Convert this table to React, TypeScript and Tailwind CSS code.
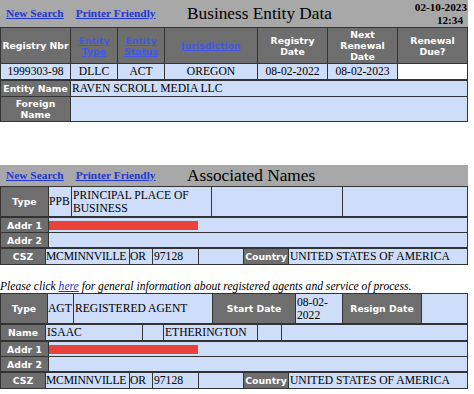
import React from "react";

const SERIF = "font-['Liberation_Serif',serif]";
const LBL =
  "bg-[#6e6e6e] text-white font-bold text-[9.3px] leading-[11px] flex items-center justify-center text-center font-['DejaVu_Sans',sans-serif] overflow-hidden whitespace-nowrap";
const VAL =
  "bg-[#cdddfa] text-black text-[11.6px] leading-[13px] flex items-center pl-px font-['Liberation_Serif',serif] overflow-hidden whitespace-nowrap";
const VALC =
  "bg-[#cdddfa] text-black text-[11.6px] leading-[13px] flex items-center justify-center font-['Liberation_Serif',serif] overflow-hidden whitespace-nowrap";
const LINK = "text-[#2236d0] underline";

function Bar({ title, date }: { title: string; date?: boolean }) {
  return (
    <div className={`flex items-center bg-[#a8a8a8] w-[468px] ${date ? "h-[27px]" : "h-[21px]"} ${SERIF}`}>
      <div className="w-[187px] shrink-0 flex gap-[12px] pl-[6px] font-bold text-[11.4px] leading-[13px]">
        <a className={LINK}>New Search</a>
        <a className={LINK}>Printer Friendly</a>
      </div>
      <div className="flex-1 text-[17.3px] leading-[20px] text-black">{title}</div>
      {date && (
        <div className="text-right font-bold text-[11.2px] leading-[12.5px] pr-px text-black">
          02-10-2023
          <br />
          <span className="pr-[4px]">12:34</span>
        </div>
      )}
    </div>
  );
}

function Redact() {
  return <div className="-ml-[4px] mt-[3px] w-[152px] h-[9px] bg-[#e8423b] self-start" />;
}

function AddrTable() {
  return (
    <div className="grid grid-cols-[47px_418px] grid-rows-[14px_14px] gap-px p-px bg-[#333] w-[468px]">
      <div className={LBL}>Addr 1</div>
      <div className={VAL + " !items-start"}>
        <Redact />
      </div>
      <div className={LBL}>Addr 2</div>
      <div className={VAL}></div>
    </div>
  );
}

function CszTable() {
  return (
    <div className="grid grid-cols-[44px_83px_22px_45px_44px_44px_178px] grid-rows-[15px] gap-px p-px bg-[#333] w-[468px]">
      <div className={LBL}>CSZ</div>
      <div className={VAL + " !pl-0 tracking-[-0.2px]"}>MCMINNVILLE</div>
      <div className={VAL + " !pl-0"}>OR</div>
      <div className={VAL}>97128</div>
      <div className={VAL}></div>
      <div className={LBL}>Country</div>
      <div className={VAL}>UNITED STATES OF AMERICA</div>
    </div>
  );
}

export default function App() {
  return (
    <div className="w-[474px] h-[394px] bg-white overflow-hidden">
      {/* Section 1 */}
      <Bar title="Business Entity Data" date />
      <div className="grid grid-cols-[69px_46px_46px_92px_69px_69px_69px] grid-rows-[35px_15px] gap-px p-px bg-[#333] w-[468px]">
        <div className={LBL}>Registry Nbr</div>
        <div className={LBL}>
          <span className="text-[#4259e0] underline">
            Entity
            <br />
            Type
          </span>
        </div>
        <div className={LBL}>
          <span className="text-[#4259e0] underline">
            Entity
            <br />
            Status
          </span>
        </div>
        <div className={LBL}>
          <span className="text-[#4259e0] underline">Jurisdiction</span>
        </div>
        <div className={LBL}>
          Registry
          <br />
          Date
        </div>
        <div className={LBL}>
          Next
          <br />
          Renewal
          <br />
          Date
        </div>
        <div className={LBL}>
          Renewal
          <br />
          Due?
        </div>
        <div className={VALC}>1999303-98</div>
        <div className={VALC}>DLLC</div>
        <div className={VALC}>ACT</div>
        <div className={VALC}>OREGON</div>
        <div className={VALC}>08-02-2022</div>
        <div className={VALC}>08-02-2023</div>
        <div className="bg-white"></div>
      </div>
      <div className="grid grid-cols-[69px_396px] grid-rows-[15px_24px] gap-px p-px bg-[#333] w-[468px]">
        <div className={LBL}>Entity Name</div>
        <div className={VAL}>RAVEN SCROLL MEDIA LLC</div>
        <div className={LBL}>
          Foreign
          <br />
          Name
        </div>
        <div className={VAL}></div>
      </div>

      {/* Section 2 */}
      <div className="mt-[43px]">
        <Bar title="Associated Names" />
        <div className="grid grid-cols-[47px_22px_139px_130px_124px] grid-rows-[29px] gap-px p-px bg-[#333] w-[468px]">
          <div className={LBL}>Type</div>
          <div className={VAL + " !pl-0"}>PPB</div>
          <div className={VAL + " whitespace-normal"}>
            PRINCIPAL PLACE OF
            <br />
            BUSINESS
          </div>
          <div className={VAL}></div>
          <div className={VAL}></div>
        </div>
        <AddrTable />
        <CszTable />
      </div>

      {/* Section 3 */}
      <div className={`mt-[15px] italic text-[11.6px] leading-[13px] text-black whitespace-nowrap ${SERIF}`}>
        Please click <a className={LINK}>here</a> for general information about registered agents and service of process.
      </div>
      <div className="grid grid-cols-[46px_25px_138px_82px_46px_78px_45px] grid-rows-[29px] gap-px p-px bg-[#333] w-[468px]">
        <div className={LBL}>Type</div>
        <div className={VAL + " !pl-0"}>AGT</div>
        <div className={VAL}>REGISTERED AGENT</div>
        <div className={LBL}>Start Date</div>
        <div className={VAL + " whitespace-normal"}>
          08-02-
          <br />
          2022
        </div>
        <div className={LBL}>Resign Date</div>
        <div className={VAL}></div>
      </div>
      <div className="grid grid-cols-[44px_96px_20px_93px_23px_185px] grid-rows-[15px] gap-px p-px bg-[#333] w-[468px]">
        <div className={LBL}>Name</div>
        <div className={VAL}>ISAAC</div>
        <div className={VAL}></div>
        <div className={VAL}>ETHERINGTON</div>
        <div className={VAL}></div>
        <div className={VAL}></div>
      </div>
      <AddrTable />
      <CszTable />
    </div>
  );
}
